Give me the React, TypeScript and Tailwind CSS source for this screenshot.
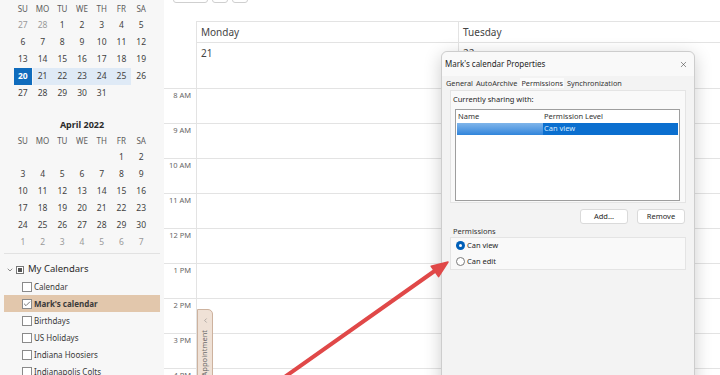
import { Check, ChevronDown, ChevronLeft, X } from "lucide-react";
import clsx from "clsx";

const dayHeads = ["SU", "MO", "TU", "WE", "TH", "FR", "SA"];

// "~" marks a day of another month
const march = [
  ["~27", "~28", "1", "2", "3", "4", "5"],
  ["6", "7", "8", "9", "10", "11", "12"],
  ["13", "14", "15", "16", "17", "18", "19"],
  ["20", "21", "22", "23", "24", "25", "26"],
  ["27", "28", "29", "30", "31", "", ""],
];

const april = [
  ["", "", "", "", "", "1", "2"],
  ["3", "4", "5", "6", "7", "8", "9"],
  ["10", "11", "12", "13", "14", "15", "16"],
  ["17", "18", "19", "20", "21", "22", "23"],
  ["24", "25", "26", "27", "28", "29", "30"],
  ["~1", "~2", "~3", "~4", "~5", "~6", "~7"],
];

const calendars = [
  { name: "Calendar", checked: false },
  { name: "Mark's calendar", checked: true },
  { name: "Birthdays", checked: false },
  { name: "US Holidays", checked: false },
  { name: "Indiana Hoosiers", checked: false },
  { name: "Indianapolis Colts", checked: false },
];

const hours = ["8 AM", "9 AM", "10 AM", "11 AM", "12 PM", "1 PM", "2 PM", "3 PM", "4 PM"];

function MiniMonth({ weeks, selectedWeek }: { weeks: string[][]; selectedWeek?: number }) {
  return (
    <div className="grid w-[138px] grid-cols-7">
      {dayHeads.map((h) => (
        <div key={h} className="flex h-[16px] items-center justify-center text-[8px] text-[#5c5c5c]">
          {h}
        </div>
      ))}
      {weeks.map((week, wi) =>
        week.map((cell, ci) => {
          const muted = cell.startsWith("~");
          const label = muted ? cell.slice(1) : cell;
          const isSelected = wi === selectedWeek && ci === 0;
          const inWeek = wi === selectedWeek && ci > 0 && ci < 6;
          return (
            <div
              key={`${wi}-${ci}`}
              className={clsx(
                "flex h-[17px] items-center justify-center text-[8.5px]",
                isSelected && "mx-[1px] bg-[#0f6cbd] font-bold text-white",
                inWeek && "bg-[#dfeaf6] text-[#424242]",
                !isSelected && !inWeek && (muted ? "text-[#9a9a9a]" : "text-[#424242]")
              )}
            >
              {label}
            </div>
          );
        })
      )}
    </div>
  );
}

function Sidebar() {
  return (
    <div className="h-full w-[164px] shrink-0 bg-[#f7f7f7] pt-[1px]">
      {/* March mini calendar */}
      <div className="ml-[13px]">
        <MiniMonth weeks={march} selectedWeek={3} />
      </div>
      {/* April mini calendar */}
      <div className="ml-[13px] mt-[15px] w-[138px]">
        <div className="flex h-[16px] items-center justify-center text-[9px] font-bold text-[#2b2b2b]">
          April 2022
        </div>
        <MiniMonth weeks={april} />
      </div>
      <div className="mx-[4px] mt-[2px] border-t border-[#e2e2e2]" />
      {/* Calendar list */}
      <div className="mt-[7px] flex h-[17px] items-center pl-[6px] text-[#2b2b2b]">
        <ChevronDown size={8} strokeWidth={1.6} />
        <span className="ml-[2px] flex h-[8px] w-[8px] items-center justify-center border border-[#777] bg-white">
          <span className="h-[4px] w-[4px] bg-[#555]" />
        </span>
        <span className="ml-[4px] text-[9.5px]">My Calendars</span>
      </div>
      {calendars.map((cal) => (
        <div
          key={cal.name}
          className={clsx(
            "mx-[4px] flex h-[17px] items-center pl-[18px] text-[8px] text-[#3a3a3a]",
            cal.checked && "bg-[#e2c7ac] font-bold text-[#2b2b2b]"
          )}
        >
          <span className="flex h-[10px] w-[10px] items-center justify-center border border-[#8a8a8a] bg-white">
            {cal.checked && <Check size={8} strokeWidth={2} className="text-[#333]" />}
          </span>
          <span className="ml-[2px]">{cal.name}</span>
        </div>
      ))}
    </div>
  );
}

function CalendarView() {
  return (
    <div className="relative h-full flex-1 overflow-hidden bg-white">
      {/* Toolbar, mostly scrolled out of view */}
      <div className="flex h-[21px] items-start pl-[9px]">
        <div className="-mt-[14px] flex gap-[4px]">
          <div className="h-[17px] w-[35px] rounded-[3px] border border-[#cfcfcf] bg-white" />
          <div className="h-[17px] w-[16px] rounded-[3px] border border-[#cfcfcf] bg-white" />
          <div className="h-[17px] w-[16px] rounded-[3px] border border-[#cfcfcf] bg-white" />
        </div>
      </div>
      {/* Day grid */}
      <div className="grid grid-cols-[32px_262px_262px] text-[#444]">
        {/* Day names */}
        <div />
        <div className="flex h-[21px] items-center border-l border-t border-[#e3e3e3] pl-[4px] text-[10px]">
          Monday
        </div>
        <div className="flex h-[21px] items-center border-l border-t border-[#e3e3e3] pl-[4px] text-[10px]">
          Tuesday
        </div>
        {/* All-day row */}
        <div />
        <div className="h-[46px] border-l border-t border-[#e3e3e3] pl-[4px] pt-[3px] text-[10px]">21</div>
        <div className="h-[46px] border-l border-t border-[#e3e3e3] pl-[4px] pt-[3px] text-[10px]">22</div>
        {/* Hour rows */}
        {hours.map((h) => (
          <div key={h} className="contents">
            <div className="h-[35px] border-t border-[#e3e3e3] pr-[5px] pt-[1px] text-right text-[7.5px] text-[#666]">
              {h}
            </div>
            <div className="h-[35px] border-l border-t border-[#e3e3e3]" />
            <div className="h-[35px] border-l border-t border-[#e3e3e3]" />
          </div>
        ))}
      </div>
      {/* Collapsed appointment pane tab */}
      <div className="absolute left-[33px] top-[309px] flex h-[75px] w-[16px] flex-col items-center rounded-tr-[5px] border border-[#cdb29e] bg-[#efe1d6] pt-[7px] text-[#6b6b6b]">
        <ChevronLeft size={7} strokeWidth={1.6} />
        <span className="mt-[6px] rotate-180 text-[7.5px] [writing-mode:vertical-rl]">Appointment</span>
      </div>
    </div>
  );
}

function PropertiesDialog() {
  return (
    <div className="absolute left-[441px] top-[51px] h-[340px] w-[254px] rounded-t-[6px] border border-[#cdcdcd] bg-[#f3f3f3] text-[#1f1f1f] shadow-[0_4px_18px_rgba(0,0,0,0.2)]">
      {/* Title bar */}
      <div className="flex h-[24px] items-center justify-between rounded-t-[6px] bg-[#f9f9f9] pl-[3px] pr-[6px]">
        <span className="text-[8px]">Mark's calendar Properties</span>
        <X size={9} strokeWidth={1.4} className="text-[#333]" />
      </div>
      {/* Tabs */}
      <div className="flex h-[14px] items-center gap-[3px] pl-[4px] text-[7.3px] text-[#333]">
        <span>General</span>
        <span>AutoArchive</span>
        <span className="bg-[#fbfbfb] px-[1px]">Permissions</span>
        <span>Synchronization</span>
      </div>
      {/* Sharing list */}
      <div className="ml-[8px] h-[113px] w-[236px] border border-[#e4e4e4] bg-[#f9f9f9]">
        <div className="flex h-[18px] items-center pl-[2px] text-[7.5px]">Currently sharing with:</div>
        <div className="ml-[4px] h-[92px] w-[225px] border border-[#9e9e9e] bg-white">
          <div className="flex h-[13px] items-center text-[7.5px] text-[#333]">
            <span className="w-[88px] pl-[2px]">Name</span>
            <span>Permission Level</span>
          </div>
          <div className="mx-[1px] flex h-[12px] text-[7.5px]">
            <span className="w-[86px] bg-[#3f8fde] bg-gradient-to-b from-[#7fb5ea] to-[#2f85db]" />
            <span className="flex flex-1 items-center bg-[#0b6fcf] pl-[1px] text-[#d7ebff]">Can view</span>
          </div>
        </div>
      </div>
      {/* Buttons */}
      <div className="ml-[8px] mt-[6px] flex w-[236px] justify-end gap-[9px] pr-[1px]">
        <button className="flex h-[15px] w-[48px] items-center justify-center rounded-[3px] border border-[#dadada] bg-white text-[7.5px]">
          Add...
        </button>
        <button className="flex h-[15px] w-[48px] items-center justify-center rounded-[3px] border border-[#dadada] bg-white text-[7.5px]">
          Remove
        </button>
      </div>
      {/* Permissions group */}
      <div className="ml-[11px] mt-[3px] flex h-[10px] items-center text-[7.5px] text-[#333]">Permissions</div>
      <div className="ml-[8px] flex h-[33px] w-[236px] flex-col justify-center gap-[4px] border border-[#e4e4e4] bg-[#f9f9f9] pl-[5px] text-[7.5px]">
        <div className="flex items-center gap-[2px]">
          <span className="flex h-[9px] w-[9px] items-center justify-center rounded-full bg-[#005fb8]">
            <span className="h-[3px] w-[3px] rounded-full bg-white" />
          </span>
          Can view
        </div>
        <div className="flex items-center gap-[2px]">
          <span className="h-[9px] w-[9px] rounded-full border border-[#7a7a7a] bg-white" />
          Can edit
        </div>
      </div>
    </div>
  );
}

function Arrow() {
  return (
    <svg className="pointer-events-none absolute left-0 top-0" width="720" height="375" viewBox="0 0 720 375">
      <line x1="279" y1="381" x2="436" y2="270" stroke="#e04848" strokeWidth="4" strokeLinecap="round" />
      <polygon points="448,262 438.6,276.6 431.2,266.2" fill="#e04848" stroke="#e04848" strokeWidth="1.5" strokeLinejoin="round" />
    </svg>
  );
}

export default function App() {
  return (
    <div className="relative flex h-[375px] w-[720px] overflow-hidden bg-white font-['Noto_Sans','Open_Sans',sans-serif]">
      <Sidebar />
      <CalendarView />
      <PropertiesDialog />
      <Arrow />
    </div>
  );
}
